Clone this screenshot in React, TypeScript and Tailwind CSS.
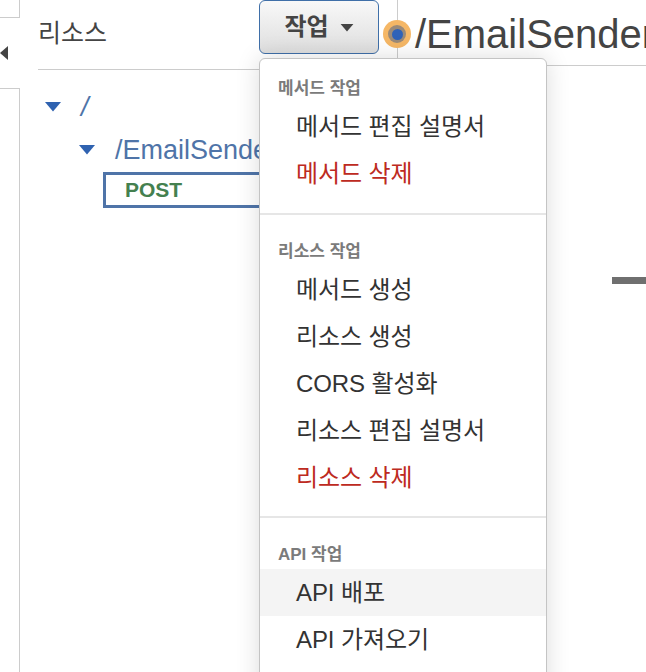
const font = "[font-family:'Liberation_Sans','Noto_Sans_CJK_KR',sans-serif]";

const Caret = ({ className }: { className: string }) => (
  <svg className={className} viewBox="0 0 16 10">
    <path d="M0 0H16L8 9.5Z" fill="currentColor" />
  </svg>
);

const MenuHeader = ({ label, first }: { label: string; first?: boolean }) => (
  <div className={`${first ? "" : "mt-[26px]"} h-[20px] mb-[5px] pl-[18px] flex items-center text-[17px] leading-none font-bold text-[#7b7b7b]`}>
    {label}
  </div>
);

const MenuItem = ({ label, red, active }: { label: string; red?: boolean; active?: boolean }) => (
  <div
    className={`h-[47px] pl-[36px] flex items-center text-[24px] tracking-[-0.1px] leading-none whitespace-nowrap ${red ? "text-[#bd2a21]" : "text-[#333333]"} ${active ? "bg-[#f4f4f4]" : ""}`}
  >
    {label}
  </div>
);

export default function App() {
  return (
    <div className={`relative w-[646px] h-[672px] overflow-hidden bg-white flex ${font}`}>
      {/* collapsed left strip */}
      <div className="w-[38px] shrink-0 flex flex-col">
        <div className="w-[20px] h-[18px] border-r border-b border-[#cccccc]" />
        <div className="w-[20px] h-[70px] flex items-center">
          <div className="w-0 h-0 mt-[-1px] border-y-[7px] border-y-transparent border-r-[8px] border-r-[#444444]" />
        </div>
        <div className="w-[20px] flex-1 border-r border-t border-[#cccccc]" />
      </div>

      {/* resources panel */}
      <div className="w-[359px] shrink-0 flex flex-col">
        <div className="h-[70px] flex border-b border-[#cccccc]">
          <div className="w-[221px] pt-[18px] text-[25px] leading-[30px] whitespace-nowrap text-[#444444]">리소스</div>
          <div className="w-[120px] h-[54px] rounded-[6px] border border-[#3f6fa8] bg-gradient-to-b from-[#f8f8f8] to-[#dedede] flex items-center justify-center gap-[11px] text-[24px] font-bold text-[#444444]">
            작업
            <Caret className="w-[14px] h-[8px] mt-[2px] text-[#444444]" />
          </div>
        </div>

        <div className="pt-[25px]">
          <div className="h-[24px] pl-[7px] flex items-center">
            <Caret className="w-[16px] h-[10px] text-[#2f62b0]" />
            <span className="ml-[20px] text-[27px] leading-none italic text-[#4f74a8]">/</span>
          </div>
          <div className="h-[24px] mt-[19px] pl-[41px] flex items-center">
            <Caret className="w-[16px] h-[10px] text-[#2f62b0]" />
            <span className="ml-[20px] text-[27px] leading-none whitespace-nowrap text-[#4f74a8]">/EmailSender</span>
          </div>
          <div className="ml-[65px] mt-[10px] h-[36px] w-[200px] border-[3px] border-[#4f74a8] pl-[19px] pb-[2px] flex items-center text-[21px] leading-none font-bold text-[#44804f]">
            POST
          </div>
        </div>
      </div>

      {/* method panel */}
      <div className="flex-1 min-w-0 flex flex-col border-l border-[#cccccc] h-[66px]">
        <div className="h-[66px] shrink-0 border-b border-[#cccccc] pl-[17px] pt-[10px] text-[40px] leading-[48px] whitespace-nowrap text-[#444444]">
          /EmailSender
        </div>
        <div className="h-[211px] shrink-0" />
        <div className="w-[34px] h-[7px] ml-[214px] shrink-0 bg-[#6f6f6f]" />
      </div>

      {/* status dot over the panel divider */}
      <div className="absolute left-[383px] top-[20px] w-[28px] h-[28px] rounded-full bg-[#f5b766] flex items-center justify-center">
        <div className="w-[18px] h-[18px] rounded-full bg-[#9b8a78] flex items-center justify-center">
          <div className="w-[11px] h-[11px] rounded-full bg-[#2f62b8]" />
        </div>
      </div>

      {/* dropdown */}
      <div className="absolute left-[259px] top-[58px] w-[288px] h-[640px] bg-white border border-[#c4c4c4] rounded-[6px] shadow-[0_0_24px_rgba(0,0,0,0.14)] pt-[19px]">
        <MenuHeader label="메서드 작업" first />
        <MenuItem label="메서드 편집 설명서" />
        <MenuItem label="메서드 삭제" red />
        <div className="h-[2px] mt-[16px] bg-[#e6e6e6]" />
        <MenuHeader label="리소스 작업" />
        <MenuItem label="메서드 생성" />
        <MenuItem label="리소스 생성" />
        <MenuItem label="CORS 활성화" />
        <MenuItem label="리소스 편집 설명서" />
        <MenuItem label="리소스 삭제" red />
        <div className="h-[2px] mt-[15px] bg-[#e6e6e6]" />
        <MenuHeader label="API 작업" />
        <MenuItem label="API 배포" active />
        <MenuItem label="API 가져오기" />
      </div>
    </div>
  );
}
